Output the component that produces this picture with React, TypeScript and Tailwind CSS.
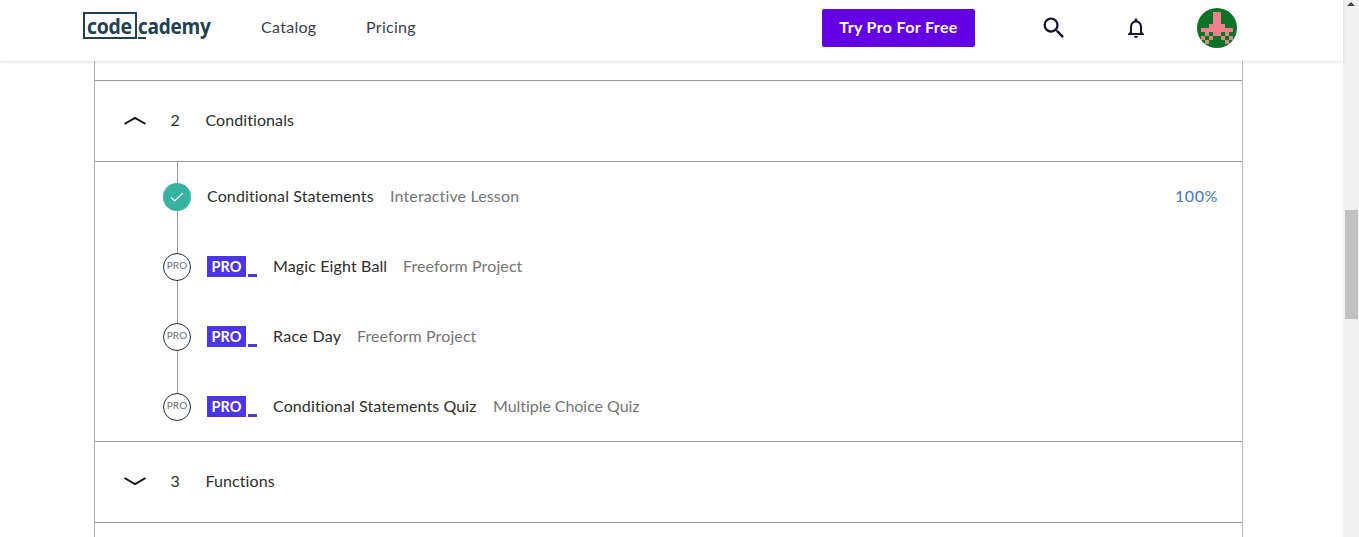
import React from "react";
import { MdSearch, MdNotificationsNone } from "react-icons/md";

const avatarRows = [
  "..........",
  "....##....",
  "....##....",
  "....##....",
  "...####...",
  ".########.",
  "..o.##.o..",
  ".o.o..o.o.",
  "..o....o..",
  "..........",
];

function Avatar() {
  return (
    <svg className="h-10 w-10 rounded-full" viewBox="0 0 10 10" shapeRendering="crispEdges">
      <rect width="10" height="10" fill="#0b7228" />
      {avatarRows.flatMap((row, y) =>
        row.split("").map((cell, x) =>
          cell !== "." ? (
            <rect key={`${x}-${y}`} x={x} y={y} width="1" height="1" fill={cell === "o" ? "#cf9083" : "#f0808f"} />
          ) : null
        )
      )}
    </svg>
  );
}

function Logo() {
  return (
    <div className="flex h-[27px] text-[20.5px] font-bold leading-[24px] text-[#204056]">
      <div className="w-[54px] border-2 border-[#204056] pl-[2px]">
        <span className="block origin-left scale-x-[0.95] tracking-[-0.3px]">code</span>
      </div>
      <div className="relative pl-[1px] pt-[2px]">
        <span className="block origin-left scale-x-[0.93] tracking-[-0.3px]">cademy</span>
        <span className="absolute bottom-0 left-[1px] h-[2px] w-[8px] bg-[#204056]" />
      </div>
    </div>
  );
}

function Header() {
  return (
    <header className="relative z-10 flex h-[61px] w-[1343px] shrink-0 items-start bg-white text-[16px] leading-[24px] text-[#3c3c50] shadow-[0_1px_3px_rgba(0,0,0,0.14)]">
      <div className="ml-[83px] mt-[12px] w-[178px] font-['Open_Sans',sans-serif]">
        <Logo />
      </div>
      <nav className="mt-[15px] flex">
        <a className="w-[105px] tracking-[0.3px]">Catalog</a>
        <a className="w-[456px] tracking-[0.3px]">Pricing</a>
      </nav>
      <button className="mt-[9px] h-[38px] w-[153px] rounded-[2px] bg-[#6400e4] pb-[2px] text-[16px] font-bold tracking-[0.35px] text-white">
        Try Pro For Free
      </button>
      <MdSearch className="ml-[65px] mt-[14px] h-[28px] w-[28px] text-[#15152f]" />
      <MdNotificationsNone className="ml-[56px] mt-[16px] h-[24px] w-[24px] text-[#15152f]" />
      <div className="ml-[49px] mt-[8px]">
        <Avatar />
      </div>
    </header>
  );
}

function Section({ number, title, open }: { number: number; title: string; open?: boolean }) {
  return (
    <div className="flex h-[81px] items-center border-b border-[#999] pl-[29px] text-[16px] text-[#2e2e2e]">
      <svg className="h-[10px] w-[22px]" viewBox="0 0 22 10" fill="none" stroke="#111" strokeWidth="2">
        <path d={open ? "M0.5 8 L11 2 L21.5 8" : "M0.5 1 L11 7 L21.5 1"} />
      </svg>
      <span className="ml-[24.5px] w-[35px] pb-[2px]">{number}</span>
      <span className="pb-[2px] tracking-[0.08px]">{title}</span>
    </div>
  );
}

type Lesson = { title: string; kind: string; done?: boolean; titleClass: string; kindClass: string };

const lessons: Lesson[] = [
  { title: "Conditional Statements", kind: "Interactive Lesson", done: true, titleClass: "w-[183px] tracking-[0.13px]", kindClass: "tracking-[0.14px]" },
  { title: "Magic Eight Ball", kind: "Freeform Project", titleClass: "w-[130px] tracking-[0.13px]", kindClass: "tracking-[0.1px]" },
  { title: "Race Day", kind: "Freeform Project", titleClass: "w-[84px] tracking-[0.3px]", kindClass: "tracking-[0.1px]" },
  { title: "Conditional Statements Quiz", kind: "Multiple Choice Quiz", titleClass: "w-[220px] tracking-[0.11px]", kindClass: "tracking-[-0.05px]" },
];

function LessonRow({ lesson, last }: { lesson: Lesson; last: boolean }) {
  return (
    <li className="flex h-[70px] items-center whitespace-nowrap pl-[68px] pr-[24px] text-[16px]">
      <div className="flex h-full w-[28px] flex-col items-center">
        <span className="ml-px h-[21px] w-px bg-[#999]" />
        {lesson.done ? (
          <span className="flex h-[28px] w-[28px] items-center justify-center rounded-full bg-[#35b3a0]">
            <svg className="h-[10px] w-[14px]" viewBox="0 0 14 10" fill="none" stroke="white" strokeWidth="1.2">
              <path d="M1 5.5 L4.7 9 L13 1" />
            </svg>
          </span>
        ) : (
          <span className="flex h-[28px] w-[28px] items-center justify-center rounded-full border border-[#1f2a38] pb-[4px] text-[10px] tracking-[0.1px] text-[#68707a]">
            PRO
          </span>
        )}
        {!last && <span className="ml-px h-[21px] w-px bg-[#999]" />}
      </div>
      <div className="ml-[16px] flex items-center pb-[2px]">
        {!lesson.done && (
          <div className="mr-[16px] flex h-[21px] w-[50px] items-end justify-between">
            <span className="flex h-[21px] w-[39px] items-center justify-center bg-[#4b35e8] pt-[2px] text-[14.5px] font-bold text-white">PRO</span>
            <span className="h-[3px] w-[9px] bg-[#4b35e8]" />
          </div>
        )}
        <span className={`text-[#2e2e2e] ${lesson.titleClass}`}>{lesson.title}</span>
        <span className={`text-[#757575] ${lesson.kindClass}`}>{lesson.kind}</span>
      </div>
      {lesson.done && <span className="ml-auto pb-[2px] tracking-[0.6px] text-[#4474cb]">100%</span>}
    </li>
  );
}

export default function App() {
  return (
    <div className="flex h-[537px] w-[1359px] overflow-hidden bg-white font-['Lato',sans-serif]">
      <div className="flex w-[1343px] flex-col">
        <Header />
        <main className="ml-[94px] w-[1149px] flex-1 border-x border-l-[#aaa] border-r-[#bbb]">
          <div className="h-[20px] border-b border-[#999]" />
          <Section number={2} title="Conditionals" open />
          <ul className="h-[280px] border-b border-[#999]">
            {lessons.map((lesson, i) => (
              <LessonRow key={lesson.title} lesson={lesson} last={i === lessons.length - 1} />
            ))}
          </ul>
          <Section number={3} title="Functions" />
        </main>
      </div>
      <aside className="flex w-[16px] flex-col items-center bg-[#f0f0f0]">
        <svg className="mt-[2px] h-[4px] w-[8px]" viewBox="0 0 8 4">
          <path d="M0 4 L4 0 L8 4Z" fill="#444" />
        </svg>
        <div className="ml-px mt-[204px] h-[109px] w-[13px] bg-[#c1c1c1]" />
      </aside>
    </div>
  );
}
